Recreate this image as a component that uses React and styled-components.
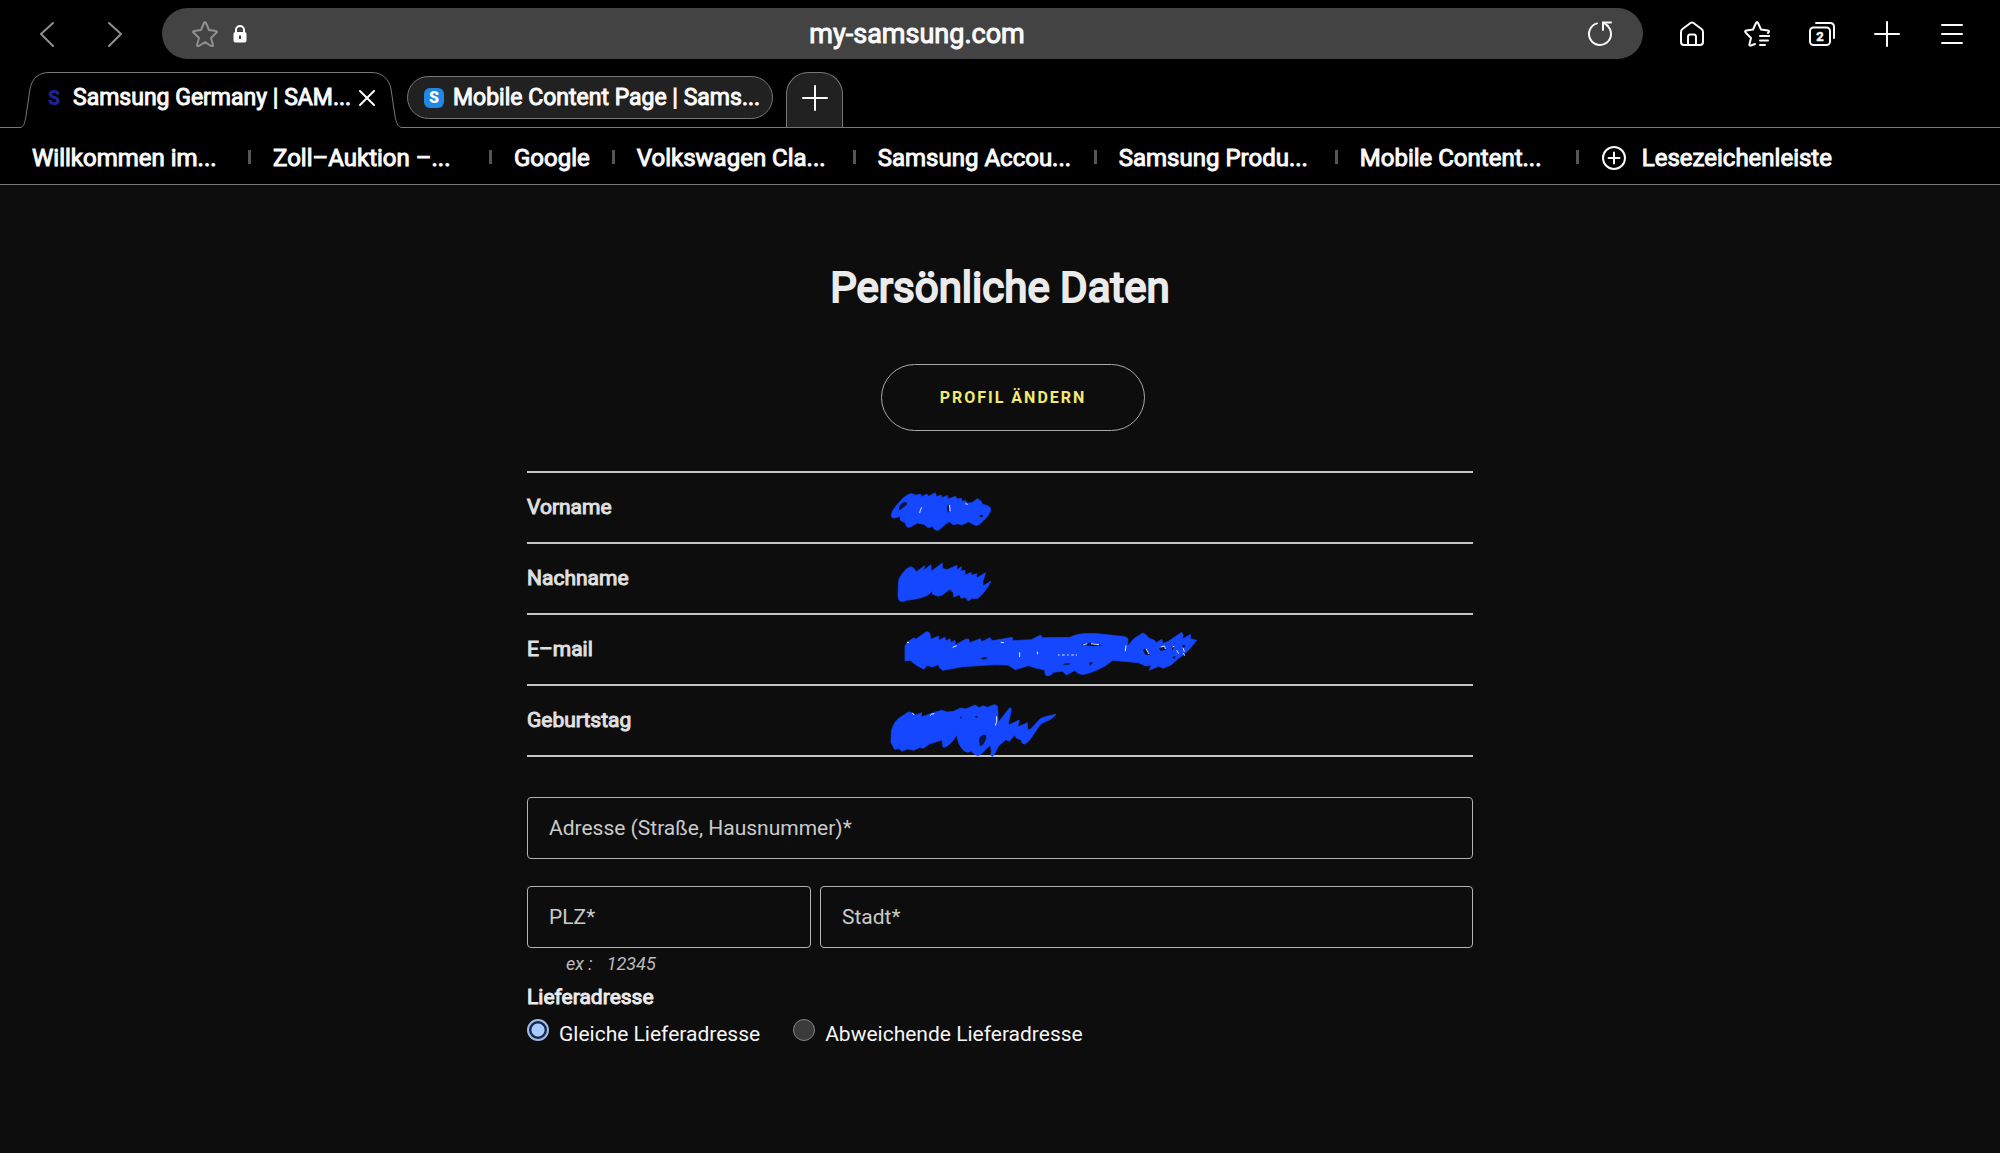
import React from "react";
import styled, { createGlobalStyle, css } from "styled-components";

const GlobalStyle = createGlobalStyle`
  * {
    box-sizing: border-box;
  }
  body {
    margin: 0;
    background-color: #0d0d0d;
    color: #ebebeb;
    font-family: Roboto, "Noto Sans", sans-serif;
  }
  button, input {
    font-family: inherit;
  }
`;

// regular face thickened by an outline, narrower than the real bold
const heavy = css`
  font-weight: 400;
  -webkit-text-stroke: 1px currentColor;
`;

const Browser = styled.header`
  background-color: #000000;
  border-bottom: 1px solid #777777;
`;

const Toolbar = styled.div`
  display: flex;
  align-items: center;
  padding: 8px 35px 0 34px;
`;

const ButtonGroup = styled.div`
  display: flex;
  gap: ${(props) => props.$gap}px;
`;

const IconButton = styled.button`
  display: flex;
  align-items: center;
  justify-content: center;
  flex-shrink: 0;
  width: 26px;
  height: 26px;
  padding: 0;
  border: none;
  background: none;
  color: ${(props) => (props.$dim ? "#8f8f8f" : "#fafafa")};
  cursor: pointer;
`;

const AddressBar = styled.div`
  flex: 1;
  display: flex;
  align-items: center;
  height: 51px;
  margin: 0 36px 0 34px;
  padding: 0 30px;
  border-radius: 26px;
  background-color: #434343;
`;

const AddressInput = styled.input`
  flex: 1;
  min-width: 0;
  height: 40px;
  padding: 0;
  border: none;
  outline: none;
  background: none;
  color: #fafafa;
  font-size: 27px;
  text-align: center;
  ${heavy}
`;

const LockWrap = styled.span`
  display: flex;
  margin-left: 15px;
`;

const TabStrip = styled.div`
  display: flex;
  align-items: flex-start;
  height: 56px;
  margin-top: 13px;
  padding-left: 20px;
  border-bottom: 1px solid #777777;
`;

const ActiveTab = styled.div`
  position: relative;
  display: flex;
  align-items: center;
  width: 382px;
  height: 56px;
  padding: 0 26px 4px 28px;
`;

const TabShape = styled.svg`
  position: absolute;
  left: 0;
  top: 0;
`;

const TabTitle = styled.button`
  position: relative;
  flex: 1;
  min-width: 0;
  padding: 0;
  border: none;
  background: none;
  color: #fafafa;
  font-size: 23px;
  line-height: 30px;
  text-align: left;
  white-space: nowrap;
  ${heavy}
`;

const CloseButton = styled(IconButton)`
  position: relative;
  width: 18px;
`;

const Favicon = styled.span`
  position: relative;
  display: flex;
  align-items: center;
  justify-content: center;
  flex-shrink: 0;
  width: ${(props) => (props.$blue ? 20 : 12)}px;
  height: 20px;
  margin-right: ${(props) => (props.$blue ? 9 : 13)}px;
  border-radius: 6px;
  background-color: ${(props) => (props.$blue ? "#1e88e5" : "transparent")};
  color: ${(props) => (props.$blue ? "#ffffff" : "#1f2391")};
  font-size: ${(props) => (props.$blue ? 16 : 20)}px;
  font-weight: 900;
`;

const Tab = styled.div`
  display: flex;
  align-items: center;
  width: 366px;
  height: 43px;
  margin: 4px 13px 0 5px;
  padding: 0 16px;
  border: 1px solid #777777;
  border-radius: 22px;
  background-color: #212121;
`;

const NewTab = styled.button`
  display: flex;
  align-items: center;
  justify-content: center;
  width: 57px;
  height: 55px;
  padding: 0 0 4px;
  border: 1px solid #777777;
  border-bottom: none;
  border-radius: 22px 22px 0 0;
  background-color: #212121;
  color: #fafafa;
`;

const Bookmarks = styled.nav`
  display: flex;
  align-items: center;
  height: 56px;
  padding: 2px 0 0 32px;
`;

const Bookmark = styled.a`
  display: flex;
  align-items: center;
  gap: 15px;
  min-width: ${(props) => (props.$short ? 0 : 194)}px;
  padding-top: 2px;
  color: #fafafa;
  font-size: 24px;
  line-height: 30px;
  text-decoration: none;
  white-space: nowrap;
  ${heavy}
`;

const Separator = styled.span`
  width: 3px;
  height: 14px;
  margin: 0 22px;
  background-color: #555555;
`;

const Page = styled.main`
  max-width: 946px;
  margin: 0 auto;
  padding: 77px 0 80px;
`;

const Title = styled.h1`
  margin: 0 0 50px;
  font-size: 42px;
  line-height: 52px;
  text-align: center;
  ${heavy}
  -webkit-text-stroke-width: 2px;
`;

const EditButton = styled.button`
  display: block;
  width: 264px;
  height: 67px;
  margin: 0 auto 40px;
  border: 1px solid #a8a8a8;
  border-radius: 34px;
  background: none;
  color: #f3e973;
  font-size: 16px;
  font-weight: 700;
  letter-spacing: 2px;
  text-transform: uppercase;
`;

const ButtonRow = styled.div`
  padding-left: 26px;
`;

const DataTable = styled.table`
  width: 100%;
  border-collapse: collapse;
  border-bottom: 2px solid #c4c4c4;
`;

const DataRow = styled.tr`
  height: 71px;
  border-top: 2px solid #c4c4c4;
`;

const DataLabel = styled.th`
  width: 360px;
  padding: 0 0 2px;
  color: #e0e0e0;
  font-size: 21px;
  line-height: 28px;
  text-align: left;
  ${heavy}
`;

const DataValue = styled.td`
  padding: 0;
`;

const Scribble = styled.svg`
  display: block;
  width: 320px;
  height: 69px;
  overflow: visible;
`;

const Form = styled.form`
  padding-top: 40px;
`;

const FieldRow = styled.div`
  display: grid;
  grid-template-columns: ${(props) => props.$columns || "1fr"};
  gap: 9px;
  margin-bottom: ${(props) => (props.$columns ? 0 : 27)}px;
`;

const Field = styled.input`
  width: 100%;
  min-width: 0;
  height: 62px;
  padding: 0 21px;
  border: 1px solid #b4b4b4;
  border-radius: 4px;
  outline: none;
  background: none;
  color: #ebebeb;
  font-size: 21px;

  &::placeholder {
    color: #cacaca;
    opacity: 1;
  }
`;

const Hint = styled.div`
  display: flex;
  gap: 14px;
  padding: 3px 0 0 39px;
  color: #bcbcbc;
  font-size: 18px;
  font-style: italic;
  line-height: 26px;
`;

const Delivery = styled.fieldset`
  margin: 0;
  padding: 0;
  border: none;
`;

const Legend = styled.legend`
  padding: 6px 0 0;
  font-size: 21px;
  line-height: 28px;
  ${heavy}
`;

const Options = styled.div`
  display: flex;
  gap: 33px;
  padding-top: 6px;
`;

const Option = styled.label`
  display: flex;
  align-items: flex-start;
  gap: 10px;
  color: #f5f5f5;
  font-size: 21px;
  line-height: 34px;
`;

const Radio = styled.input`
  appearance: none;
  width: 22px;
  height: 22px;
  margin: 2px 0 0;
  border: 1px solid #858585;
  border-radius: 50%;
  background-color: #3b3b3b;

  &:checked {
    border: 2px solid #9dbbe6;
    background: radial-gradient(circle, #a8ccff 0 6px, #14294a 7px);
  }
`;

const Icon = ({ size = 26, width = 2, children }) => (
  <svg
    width={size}
    height={size}
    viewBox="0 0 26 26"
    fill="none"
    stroke="currentColor"
    strokeWidth={width}
    strokeLinecap="round"
    strokeLinejoin="round"
    aria-hidden="true"
  >
    {children}
  </svg>
);

const bookmarks = [
  "Willkommen im...",
  "Zoll–Auktion –...",
  "Google",
  "Volkswagen Cla...",
  "Samsung Accou...",
  "Samsung Produ...",
  "Mobile Content...",
];

const rows = [
  {
    label: "Vorname",
    viewBox: "81 9 960 207",
    ink: "M94 139 C93 125 108 106 122 92 C132 80 146 70 156 71 L168 76 L181 72 L186 80 L200 72 L206 79 L226 68 L229 80 L244 75 L246 84 L262 76 L265 87 L286 79 L292 87 L304 85 L306 94 L317 92 L321 99 L336 98 L352 86 L362 92 L368 103 L383 107 Q394 111 392 120 C388 137 371 152 357 164 Q347 169 340 163 L326 155 L305 165 L293 161 L280 164 L268 155 L258 161 L238 179 Q229 184 222 177 L219 169 L204 173 L194 164 L173 159 L152 170 Q141 175 138 166 L136 158 L124 153 Q117 147 122 139 L103 144 Q96 145 94 139Z",
    holes: "M117 118 C116 108 125 97 135 96 C144 98 142 105 137 107 C130 110 125 119 119 120Z M261 108 L267 104 L269 123 L263 128Z M359 138 a5 4 0 1 0 10 0 a5 4 0 1 0 -10 0Z",
    specks: "M179 129 L181 121 L185 112 M269 105 L270 124 M316 101 L323 103",
  },
  {
    label: "Nachname",
    viewBox: "81 222 960 207",
    ink: "M114 377 L115 344 C115 321 127 310 140 296 L153 290 L163 296 L168 306 L194 287 L191 301 L213 284 L214 304 L247 279 L247 295 L261 299 L291 286 L291 299 L305 290 L302 303 L315 301 L315 316 L333 307 L335 316 L350 311 L350 324 L377 308 L369 332 L369 348 L393 333 C383 355 368 374 352 386 L336 385 L325 393 L316 382 L304 385 L298 374 L281 381 L280 368 L269 358 L247 375 L234 379 L218 373 L216 363 L203 376 L184 383 L154 389 L140 391 Q121 400 116 388Z",
  },
  {
    label: "E–mail",
    viewBox: "81 15 960 207",
    ink: "M135 153 L135 108 L143 95 L161 84 L168 87 L198 66 Q210 63 211 78 L213 88 L236 78 L237 91 L255 81 L257 93 L270 86 L273 98 L285 91 L286 105 L318 87 L326 87 L329 98 L361 86 L365 96 L389 83 L397 92 L423 88 L457 82 L458 92 L514 89 L542 75 L547 83 L630 82 C652 70 681 69 712 71 L787 79 Q807 82 804 91 L802 109 L823 85 L849 69 L859 75 L865 83 L883 91 L889 98 L906 88 L908 101 L925 94 L965 67 L970 76 L966 88 L992 73 L991 86 L1010 91 C993 114 975 133 956 145 L933 165 L910 175 L896 169 L868 181 L874 166 L857 168 L835 158 L758 151 L735 168 L711 180 L690 188 L669 194 Q651 192 645 181 L619 195 L608 184 L580 187 Q574 198 561 198 Q553 195 554 180 L527 174 L505 167 L466 179 L444 165 L403 164 L308 170 L248 181 Q237 175 235 164 L217 171 L201 166 L192 178 L173 168 L161 160 L151 151Z",
    holes: "M663 103 Q695 92 725 106 Q693 112 663 103Z M849 121 Q854 111 861 119 L870 133 Q860 138 854 132Z M897 115 L916 106 L918 119 L901 123Z M361 145 L374 141 L384 145 L370 149Z M608 163 Q620 157 632 161 Q621 168 608 163Z M687 158 L699 156 L691 167Z M935 107 L943 110 L937 122Z M967 104 L976 106 L970 121Z M936 141 L948 138 L943 148Z",
    specks: "M141 97 L147 98 M278 112 L290 107 M422 97 L432 98 M479 127 L479 141 M532 125 L533 133 M594 135 h5 M606 135 h8 M621 135 h5 M634 135 h7 M647 135 h4 M670 104 L682 101 M693 101 L717 104 M798 106 L796 124 M858 116 L867 132 M902 111 L914 108 L916 117 M937 111 L943 109 M950 121 L956 131 M969 113 L973 125 M970 129 L974 137",
  },
  {
    label: "Geburtstag",
    viewBox: "81 228 960 207",
    ink: "M93 398 L94 365 C98 343 111 326 127 318 L145 306 L160 309 L166 316 L185 308 L184 321 L217 309 L245 301 L261 306 L281 304 L302 294 L317 297 L345 285 L358 293 L369 287 L383 292 L402 284 Q415 284 413 298 L415 337 L449 293 Q456 293 453 306 L445 340 L448 344 L478 330 L473 351 L502 338 L503 360 L512 357 L540 327 C553 318 571 318 588 312 C579 327 563 333 549 338 C537 345 532 358 521 373 C512 386 503 400 493 402 Q484 402 484 390 L470 385 L463 376 L448 394 L438 389 L416 407 Q402 437 397 440 Q390 438 394 424 L391 405 L363 433 Q352 441 342 431 L334 423 Q324 431 313 423 C302 413 291 394 291 374 L279 392 Q258 415 249 411 L246 390 L208 402 L190 415 L180 412 L161 421 L142 417 L126 424 L117 416 L104 418Z",
    holes: "M357 392 C358 379 369 373 378 375 C382 384 372 407 360 409Z M299 322 L306 319 L304 326Z M344 319 L354 318 L350 325Z",
    specks: "M157 309 L162 315 M210 317 Q214 310 223 311 M410 319 Q412 335 406 347",
  },
];

const App = () => {
  return (
    <>
      <GlobalStyle />
      <Browser>
        <Toolbar>
          <ButtonGroup $gap={42}>
            <IconButton $dim aria-label="Zurück">
              <Icon><path d="M19 2 L7 13 L19 25" /></Icon>
            </IconButton>
            <IconButton $dim aria-label="Vorwärts">
              <Icon><path d="M7 2 L19 13 L7 25" /></Icon>
            </IconButton>
          </ButtonGroup>
          <AddressBar>
            <IconButton $dim aria-label="Lesezeichen hinzufügen">
              <Icon>
                <path d="M12 2 Q13 0 14 2 L17 9 L24 10 Q26 11 24 12 L19 17 L21 24 Q21 26 19 25 L13 21 L7 25 Q5 26 5 24 L7 17 L2 12 Q0 11 2 10 L9 9Z" />
              </Icon>
            </IconButton>
            <LockWrap>
              <svg width="14" height="18" viewBox="0 0 14 18" aria-hidden="true">
                <path d="M3 8 V5 a4 4 0 0 1 8 0 V8" fill="none" stroke="#fff" strokeWidth="2" />
                <rect x="0.5" y="7" width="13" height="10.5" rx="2" fill="#fff" />
                <path d="M7 10.5 V14" stroke="#434343" strokeWidth="2" />
              </svg>
            </LockWrap>
            <AddressInput aria-label="Adresse" defaultValue="my-samsung.com" />
            <IconButton aria-label="Neu laden">
              <Icon>
                <path d="M10 2.4 A11 11 0 1 0 20 4.5" />
                <path d="M24 1.5 H16 V9" strokeLinejoin="miter" />
                <path d="M17 2 L21 5" />
              </Icon>
            </IconButton>
          </AddressBar>
          <ButtonGroup $gap={39}>
            <IconButton aria-label="Startseite">
              <Icon>
                <path d="M2 11 Q2 9 3.5 8 L11.5 2 Q13 1 14.5 2 L22.5 8 Q24 9 24 11 V21 Q24 24 21 24 H5 Q2 24 2 21Z" />
                <path d="M9 24 V16 Q9 13.5 11 13.5 H15 Q17 13.5 17 16 V24" />
              </Icon>
            </IconButton>
            <IconButton aria-label="Lesezeichen">
              <Icon>
                <path d="M11 23 L7 24.5 Q5 25 5.5 23 L7 17 L2 12 Q0 10 2.5 9.5 L9 8.5 L12 2 Q13 0 14 2 L17 8.5 L24 9.5 Q26 10 24 12" />
                <path d="M16 15 H26 M16 19.5 H24 M16 24 H21" />
              </Icon>
            </IconButton>
            <IconButton aria-label="Tabs">
              <Icon>
                <rect x="1" y="6.5" width="20" height="17.5" rx="3.5" />
                <path d="M7 2 H21 Q25 2 25 6 V17" />
                <text x="11" y="20" fontSize="13" fontWeight="700" textAnchor="middle" fill="currentColor" strokeWidth="0.5">2</text>
              </Icon>
            </IconButton>
            <IconButton aria-label="Neuer Tab">
              <Icon><path d="M13 1 V25 M1 13 H25" /></Icon>
            </IconButton>
            <IconButton aria-label="Menü">
              <Icon><path d="M3 4 H23 M3 13 H23 M3 22 H23" /></Icon>
            </IconButton>
          </ButtonGroup>
        </Toolbar>

        <TabStrip>
          <ActiveTab>
            <TabShape width="382" height="56" viewBox="0 0 382 56" aria-hidden="true">
              <path
                d="M0 55.5 C4 55.5 5 50 6 44 L10 17 C12 6 19 0.5 29 0.5 H352 C362 0.5 369 7 371 17 L375 44 C376 50 378 55.5 382 55.5 V56 H0Z"
                fill="#000"
              />
              <path
                d="M0 55.5 C4 55.5 5 50 6 44 L10 17 C12 6 19 0.5 29 0.5 H352 C362 0.5 369 7 371 17 L375 44 C376 50 378 55.5 382 55.5"
                fill="none"
                stroke="#777"
              />
            </TabShape>
            <Favicon>S</Favicon>
            <TabTitle>Samsung Germany | SAM...</TabTitle>
            <CloseButton aria-label="Tab schließen">
              <svg width="16" height="16" viewBox="0 0 16 16" stroke="currentColor" strokeWidth="2" strokeLinecap="round">
                <path d="M1 1 L15 15 M15 1 L1 15" />
              </svg>
            </CloseButton>
          </ActiveTab>
          <Tab>
            <Favicon $blue>S</Favicon>
            <TabTitle>Mobile Content Page | Sams...</TabTitle>
          </Tab>
          <NewTab aria-label="Neuer Tab">
            <Icon><path d="M13 1 V25 M1 13 H25" /></Icon>
          </NewTab>
        </TabStrip>

        <Bookmarks>
          {bookmarks.map((name) => (
            <React.Fragment key={name}>
              <Bookmark href="#" $short={name === "Google"}>{name}</Bookmark>
              <Separator />
            </React.Fragment>
          ))}
          <Bookmark href="#">
            <Icon size={26}>
              <circle cx="13" cy="13" r="11" />
              <path d="M13 7.5 V18.5 M7.5 13 H18.5" />
            </Icon>
            Lesezeichenleiste
          </Bookmark>
        </Bookmarks>
      </Browser>

      <Page>
        <Title>Persönliche Daten</Title>
        <ButtonRow>
          <EditButton>Profil ändern</EditButton>
        </ButtonRow>

        <DataTable>
          <tbody>
            {rows.map((row) => (
              <DataRow key={row.label}>
                <DataLabel scope="row">{row.label}</DataLabel>
                <DataValue>
                  <Scribble viewBox={row.viewBox} aria-hidden="true">
                    <path d={row.ink} fill="#1547ff" stroke="#1547ff" strokeWidth="2" strokeLinejoin="round" />
                    <path d={row.holes} fill="#0b1440" />
                    <path d={row.specks} fill="none" stroke="#e6ecff" strokeWidth="3" />
                  </Scribble>
                </DataValue>
              </DataRow>
            ))}
          </tbody>
        </DataTable>

        <Form>
          <FieldRow>
            <Field aria-label="Adresse" placeholder="Adresse (Straße, Hausnummer)*" />
          </FieldRow>
          <FieldRow $columns="284fr 653fr">
            <Field aria-label="PLZ" placeholder="PLZ*" />
            <Field aria-label="Stadt" placeholder="Stadt*" />
          </FieldRow>
          <Hint>
            <span>ex :</span>
            <span>12345</span>
          </Hint>
          <Delivery>
            <Legend>Lieferadresse</Legend>
            <Options>
              <Option>
                <Radio type="radio" name="delivery" defaultChecked />
                Gleiche Lieferadresse
              </Option>
              <Option>
                <Radio type="radio" name="delivery" />
                Abweichende Lieferadresse
              </Option>
            </Options>
          </Delivery>
        </Form>
      </Page>
    </>
  );
};

export default App;
